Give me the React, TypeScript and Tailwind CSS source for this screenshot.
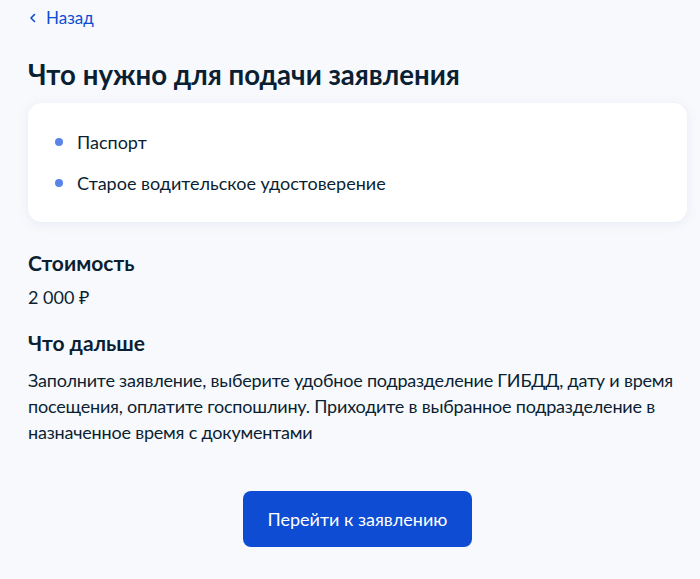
export default function App() {
  const docs = ["Паспорт", "Старое водительское удостоверение"]
  return (
    <div className="min-h-[579px] bg-[#f8f9fc] pl-[28px] pr-[13px] pt-[6px] text-[#0b1f33]" style={{ fontFamily: "Lato, 'Noto Sans', sans-serif" }}>
      <a className="flex items-center gap-[8px] text-[17px] leading-[24px] text-[#0d4cd3]">
        <svg width="10" height="10" viewBox="0 0 10 10">
          <path d="M6.5 1.5 L3 5 L6.5 8.5" stroke="#0d4cd3" strokeWidth="1.6" fill="none" strokeLinecap="round" strokeLinejoin="round" />
        </svg>
        Назад
      </a>
      <h1 className="mt-[27px] text-[27.6px] leading-[36px] font-bold">Что нужно для подачи заявления</h1>
      <div className="mt-[10px] bg-white rounded-[14px] shadow-[0_2px_12px_rgba(102,134,194,0.12)] pl-[27px] pr-[24px] py-[26px]">
        <ul className="flex flex-col gap-[15px]">
          {docs.map(d => (
            <li key={d} className="flex items-center gap-[14px] text-[18px] leading-[26px]">
              <span className="w-[8px] h-[8px] rounded-full bg-[#5a84ea]" />
              {d}
            </li>
          ))}
        </ul>
      </div>
      <h2 className="mt-[27px] text-[21px] leading-[28px] font-bold">Стоимость</h2>
      <p className="mt-[7px] text-[18px] leading-[26px]">2 000 ₽</p>
      <h2 className="mt-[19px] text-[21px] leading-[28px] font-bold">Что дальше</h2>
      <p className="mt-[10px] text-[18px] leading-[26px] tracking-[-0.2px]">
        Заполните заявление, выберите удобное подразделение ГИБДД, дату и время посещения, оплатите госпошлину. Приходите в выбранное подразделение в назначенное время с документами
      </p>
      <div className="flex justify-center mt-[46px]">
        <button className="w-[229px] h-[56px] rounded-[8px] bg-[#0d4cd3] text-white text-[18px]">Перейти к заявлению</button>
      </div>
    </div>
  )
}
